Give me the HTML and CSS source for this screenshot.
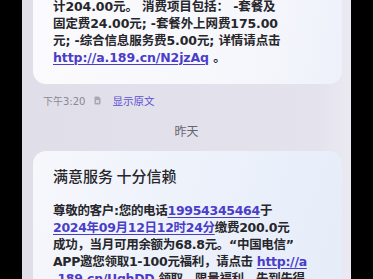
FILE: index.html
```html
<!DOCTYPE html>
<html lang="zh">
<head>
<meta charset="utf-8">
<link rel="stylesheet" href="styles.css">
</head>
<body>
<div class="screen">
  <div class="card card-top">
    <div class="line">计204.00元。 消费项目包括： -套餐及</div>
    <div class="line">固定费24.00元; -套餐外上网费175.00</div>
    <div class="line">元; -综合信息服务费5.00元; 详情请点击</div>
    <div class="line"><span class="link">http://a.189.cn/N2jzAq</span> 。</div>
  </div>
  <div class="meta">
    <span class="time">下午3:20</span>
    <svg class="sim" width="7" height="9" viewBox="0 0 7 9"><path d="M0.5 1.5 Q0.5 0.5 1.5 0.5 H4.5 L6.5 2.5 V7.5 Q6.5 8.5 5.5 8.5 H1.5 Q0.5 8.5 0.5 7.5 Z" fill="#a9a7b0"/><rect x="2" y="4" width="3" height="3" fill="#d8d6de"/></svg>
    <span class="orig">显示原文</span>
  </div>
  <div class="day">昨天</div>
  <div class="card card-bottom">
    <div class="title">满意服务 十分信赖</div>
    <div class="line">尊敬的客户:您的电话<span class="link">19954345464</span>于</div>
    <div class="line"><span class="link">2024年09月12日12时24分</span>缴费200.0元</div>
    <div class="line">成功，当月可用余额为68.8元。“中国电信”</div>
    <div class="line">APP邀您领取1-100元福利，请点击 <span class="link">http://a</span></div>
    <div class="line"><span class="link">.189.cn/UqhDD</span> 领取，限量福利，先到先得</div>
  </div>
</div>
</body>
</html>
```

FILE: styles.css
```css
html, body {
  margin: 0;
  padding: 0;
  background: #000;
  height: 279px;
  overflow: hidden;
}
.screen {
  margin-left: 22px;
  width: 329px;
  height: 279px;
  overflow: hidden;
  background: linear-gradient(90deg, #e0dee8 0%, #e4e2ec 90%, #ebe9f1 100%);
  font-family: "DejaVu Sans", "Noto Sans CJK SC", sans-serif;
  color: #26262b;
}
.card {
  margin-left: 11px;
  width: 309px;
  box-sizing: border-box;
  border-radius: 13px;
  padding-left: 20px;
}
.card-top {
  margin-top: -22.5px;
  padding-top: 20px;
  padding-bottom: 18.5px;
  background: linear-gradient(100deg, #fbfbfd 0%, #f6f7fc 70%, #eef1fa 100%);
}
.line {
  font-size: 12.5px;
  line-height: 17px;
  height: 17px;
  font-weight: 600;
  white-space: nowrap;
  letter-spacing: -0.1px;
}
.card-bottom .line {
  letter-spacing: -0.3px;
}
.link {
  color: #4a3ec8;
  text-decoration: underline;
  text-decoration-thickness: 1px;
  text-underline-offset: 2px;
}
.meta {
  display: flex;
  align-items: center;
  height: 16px;
  margin-top: 8px;
  padding-left: 21px;
  font-family: "Noto Sans CJK SC", sans-serif;
  font-size: 10.5px;
}
.time {
  color: #8a8892;
  font-family: "DejaVu Sans", "Noto Sans CJK SC", sans-serif;
  font-size: 10px;
}
.sim {
  margin-left: 9px;
}
.orig {
  margin-left: 11px;
  color: #5a4fd4;
}
.day {
  margin-top: 8px;
  height: 30px;
  line-height: 30px;
  text-align: center;
  font-family: "Noto Sans CJK SC", sans-serif;
  font-size: 12px;
  color: #66646c;
}
.card-bottom {
  margin-top: 5px;
  padding-top: 14px;
  height: 200px;
  background: linear-gradient(110deg, #f7f8fc 0%, #eef2fb 40%, #e4ecf9 100%);
}
.title {
  font-family: "Noto Sans CJK SC", sans-serif;
  font-size: 15px;
  line-height: 22px;
  font-weight: 500;
  color: #26262b;
  margin-bottom: 15px;
}
```
